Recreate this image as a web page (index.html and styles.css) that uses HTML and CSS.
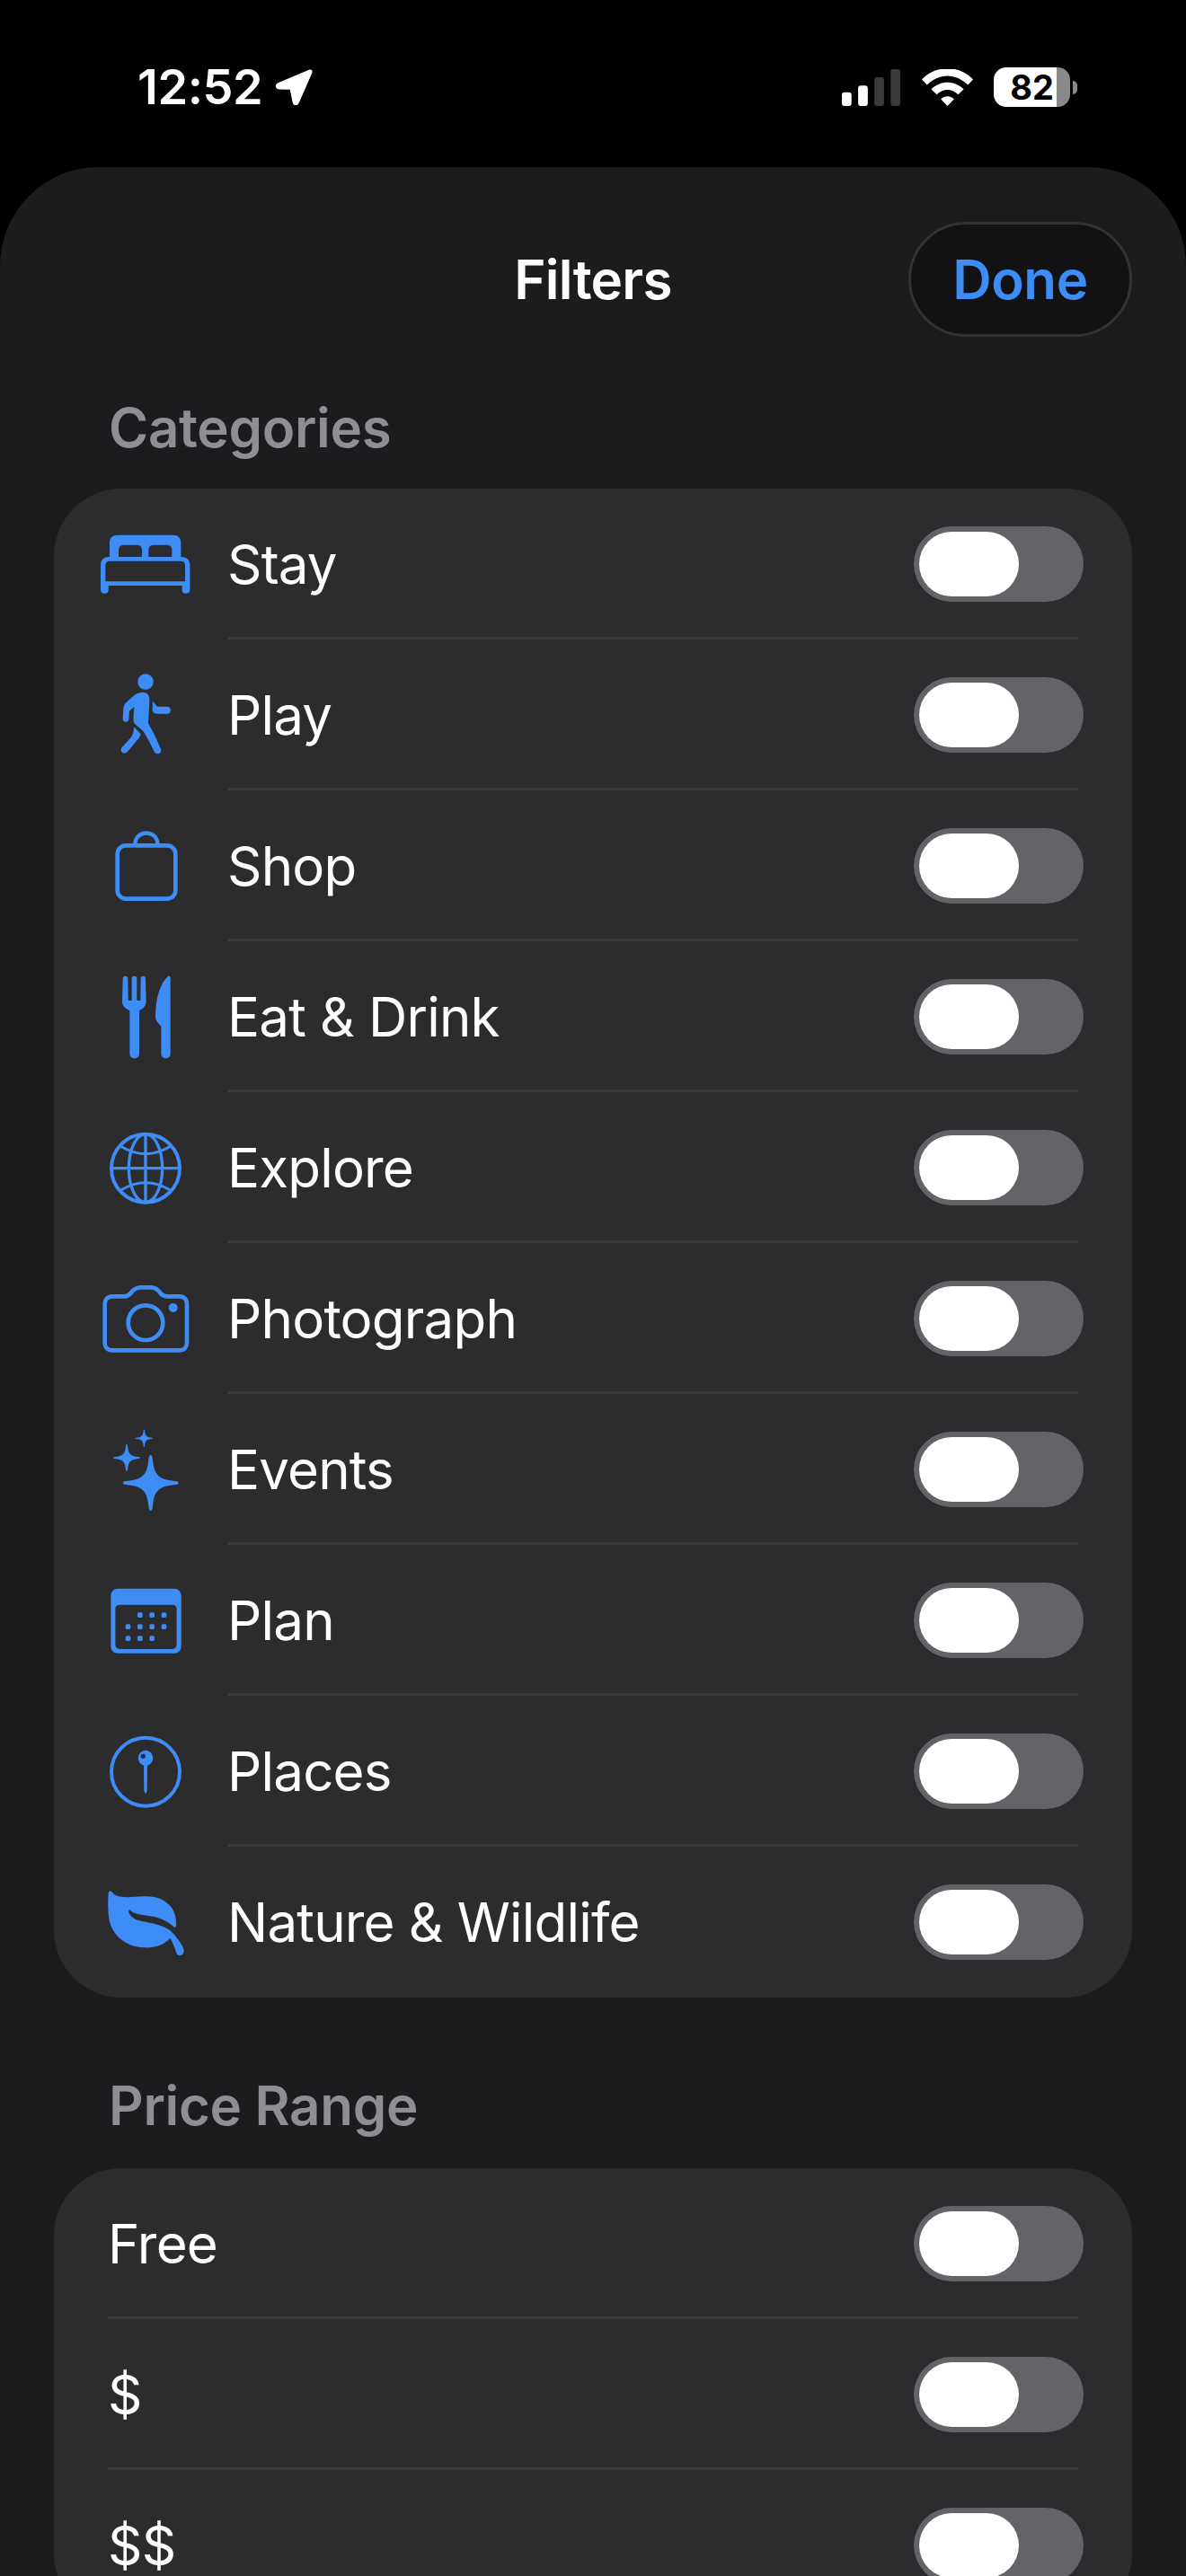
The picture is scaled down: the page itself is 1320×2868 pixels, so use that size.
FILE: index.html
```html
<!DOCTYPE html>
<html lang="en">
<head>
<meta charset="utf-8">
<title>Filters</title>
<link rel="stylesheet" href="styles.css">
</head>
<body>
<div class="status">
  <div class="status-left">
    <span class="time">12:52</span>
    <svg class="loc" viewBox="545 80 135 130"><path d="M662 85C671 82 676 88 672 97L628 197C623 208 609 207 607 195L598 152L562 151C548 150 546 134 558 129Z"/></svg>
  </div>
  <div class="status-right">
    <svg class="signal" viewBox="172 78 194 122"><rect x="172" y="155" width="32" height="45" rx="9" class="on"/><rect x="226" y="132" width="32" height="68" rx="9" class="on"/><rect x="280" y="105" width="32" height="95" rx="9" class="off"/><rect x="334" y="78" width="32" height="122" rx="9" class="off"/></svg>
    <svg class="wifi" viewBox="435 78 170 122"><path d="M435 112C482 63 558 63 605 112L588 130C548 90 492 90 452 130Z"/><path d="M466 144C497 114 543 114 574 144L556 162C533 141 507 141 484 162Z"/><path d="M498 177C511 165 529 165 542 177L520 200Z"/></svg>
    <div class="battery"><span>82</span></div>
  </div>
</div>
<main class="sheet">
  <header class="nav">
    <h1 class="title">Filters</h1>
    <button class="done">Done</button>
  </header>

  <h2 class="section first">Categories</h2>
  <section class="card icons">
    <div class="row">
      <svg class="icon" viewBox="126 24 360 360"><path fill-rule="evenodd" d="M156 206C156 190 168 180 184 180H426C442 180 454 190 454 206V292C454 298 449 302 444 302H438C432 302 428 298 428 292V276H182V292C182 298 178 302 172 302H166C161 302 156 298 156 292ZM172 208V262H438V208C438 199 433 194 424 194H186C177 194 172 199 172 208Z"/><path d="M186 180V132C186 116 196 107 212 107H398C414 107 424 116 424 132V180H394V158C394 146 388 140 376 140H334C322 140 316 146 316 158V180H294V158C294 146 288 140 276 140H234C222 140 216 146 216 158V180Z"/></svg>
      <div class="main"><span class="label">Stay</span><span class="toggle"></span></div>
    </div>
    <div class="row">
      <svg class="icon" viewBox="126 528 360 360"><circle cx="306" cy="597" r="26"/><path d="M290 633C310 630 320 640 319 660L316 720C315 730 313 735 318 742C330 760 345 795 357 822C362 835 345 845 335 830C325 810 310 780 300 765C290 752 275 745 268 735C263 720 268 700 268 680L252 695L250 722C249 735 230 735 230 720L232 685C233 675 238 668 245 663C262 648 272 636 290 633Z"/><path d="M330 662L345 680H378C394 680 394 704 378 704H345C335 704 329 698 329 690Z"/><path d="M268 748L290 772C288 780 284 785 280 790L246 830C234 844 215 828 228 815L258 782C265 772 266 760 268 748Z"/></svg>
      <div class="main"><span class="label">Play</span><span class="toggle"></span></div>
    </div>
    <div class="row">
      <svg class="icon" viewBox="126 1032 360 360"><rect class="line" x="212" y="1144" width="194" height="178" rx="28" stroke-width="14"/><path class="line" d="M271 1140C271 1090 346 1090 346 1140" stroke-width="13"/></svg>
      <div class="main"><span class="label">Shop</span><span class="toggle"></span></div>
    </div>
    <div class="row">
      <svg class="icon" viewBox="126 336 360 360"><path d="M230 388C230 378 247 378 247 388L248 462H260L260 388C260 378 277 378 277 388L277 462H289L290 388C290 378 306 378 306 388L308 465C308 480 298 488 285 496L285 640C285 660 253 660 253 640L253 496C238 488 228 480 228 465Z"/><path d="M381 380C386 378 389 382 389 388V640C389 660 358 660 358 640V548L346 534C340 528 339 522 339 514C340 450 355 405 381 380Z"/></svg>
      <div class="main"><span class="label">Eat &amp; Drink</span><span class="toggle"></span></div>
    </div>
    <div class="row">
      <svg class="icon" viewBox="126 840 360 360"><g class="line"><circle cx="306" cy="1022" r="114" stroke-width="12"/><ellipse cx="306" cy="1022" rx="56" ry="114" stroke-width="10"/><path d="M306 908V1136M192 1022H420" stroke-width="10"/><path d="M222 948Q306 1000 390 948M222 1096Q306 1044 390 1096" stroke-width="9"/></g></svg>
      <div class="main"><span class="label">Explore</span><span class="toggle"></span></div>
    </div>
    <div class="row">
      <svg class="icon" viewBox="126 144 360 360"><path class="line" stroke-width="14" d="M170 275C170 260 180 250 195 250H235C245 250 250 246 256 240C264 228 272 221 288 220H326C340 221 348 228 356 240C362 246 368 250 378 250H420C434 250 444 260 444 275V405C444 420 434 430 420 430H194C180 430 170 420 170 405Z"/><circle class="line" cx="306" cy="338" r="58" stroke-width="14"/><circle cx="398" cy="288" r="15"/></svg>
      <div class="main"><span class="label">Photograph</span><span class="toggle"></span></div>
    </div>
    <div class="row">
      <svg class="icon" viewBox="126 648 360 360"><path d="M323 780C327 780 329 785 330 795C334 840 345 862 405 867C420 869 420 877 405 879C345 884 334 906 330 951C329 961 327 966 323 966C319 966 317 961 316 951C312 906 301 884 241 879C226 877 226 869 241 867C301 862 312 840 316 795C317 785 319 780 323 780Z"/><path transform="translate(243 789) scale(.485) translate(-323 -873)" d="M323 780C327 780 329 785 330 795C334 840 345 862 405 867C420 869 420 877 405 879C345 884 334 906 330 951C329 961 327 966 323 966C319 966 317 961 316 951C312 906 301 884 241 879C226 877 226 869 241 867C301 862 312 840 316 795C317 785 319 780 323 780Z"/><path transform="translate(301 724) scale(.31) translate(-323 -873)" d="M323 780C327 780 329 785 330 795C334 840 345 862 405 867C420 869 420 877 405 879C345 884 334 906 330 951C329 961 327 966 323 966C319 966 317 961 316 951C312 906 301 884 241 879C226 877 226 869 241 867C301 862 312 840 316 795C317 785 319 780 323 780Z"/></svg>
      <div class="main"><span class="label">Events</span><span class="toggle"></span></div>
    </div>
    <div class="row">
      <svg class="icon" viewBox="126 -48 360 360"><path fill-rule="evenodd" d="M214 26H401C415 26 425 36 425 50V218C425 232 415 242 401 242H214C200 242 190 232 190 218V50C190 36 200 26 214 26ZM219 80C211 80 205 86 205 94V214C205 222 211 228 219 228H396C404 228 410 222 410 214V94C410 86 404 80 396 80Z"/><rect x="279" y="106" width="17" height="17" rx="5"/><rect x="319" y="106" width="17" height="17" rx="5"/><rect x="359" y="106" width="17" height="17" rx="5"/><rect x="239" y="145" width="17" height="17" rx="5"/><rect x="279" y="145" width="17" height="17" rx="5"/><rect x="319" y="145" width="17" height="17" rx="5"/><rect x="359" y="145" width="17" height="17" rx="5"/><rect x="239" y="184" width="17" height="17" rx="5"/><rect x="279" y="184" width="17" height="17" rx="5"/><rect x="319" y="184" width="17" height="17" rx="5"/></svg>
      <div class="main"><span class="label">Plan</span><span class="toggle"></span></div>
    </div>
    <div class="row">
      <svg class="icon" viewBox="126 456 360 360"><circle class="line" cx="306" cy="638" r="114" stroke-width="12"/><path fill-rule="evenodd" d="M306 566A26 26 0 0 1 312 617L311 700Q306 722 301 700L300 617A26 26 0 0 1 306 566ZM298 578A8 8 0 1 0 298 594A8 8 0 1 0 298 578Z"/></svg>
      <div class="main"><span class="label">Places</span><span class="toggle"></span></div>
    </div>
    <div class="row">
      <svg class="icon" viewBox="126 960 360 360"><path d="M182 1045C182 1035 190 1033 196 1042C205 1055 225 1058 260 1056C300 1053 340 1050 370 1070C398 1088 410 1115 408 1155L402 1158C385 1140 360 1128 335 1122L290 1115C270 1112 258 1105 252 1098C245 1105 255 1122 275 1132C290 1138 320 1141 345 1148C370 1155 390 1165 405 1185C420 1205 432 1220 434 1235C434 1252 416 1256 410 1245C405 1230 398 1210 388 1193C370 1215 335 1227 300 1225C240 1222 195 1185 184 1130C180 1100 180 1070 182 1045Z"/></svg>
      <div class="main"><span class="label">Nature &amp; Wildlife</span><span class="toggle"></span></div>
    </div>
  </section>

  <h2 class="section">Price Range</h2>
  <section class="card">
    <div class="row"><div class="main"><span class="label">Free</span><span class="toggle"></span></div></div>
    <div class="row"><div class="main"><span class="label">$</span><span class="toggle"></span></div></div>
    <div class="row"><div class="main"><span class="label">$$</span><span class="toggle"></span></div></div>
  </section>
</main>
</body>
</html>
```
FILE: styles.css
```css
* { box-sizing: border-box; margin: 0; padding: 0; }
html, body { height: 2868px; overflow: hidden; }
body { background: #000; color: #fff; font-family: Inter, "Liberation Sans", sans-serif; }

.status { height: 186px; padding: 8px 121px 0 153px; display: flex; align-items: center; justify-content: space-between; }
.status-left { display: flex; align-items: center; gap: 13px; }
.time { font-size: 54px; font-weight: 600; line-height: 60px; letter-spacing: -0.4px; }
.loc { width: 45px; height: 43px; fill: #fff; }
.status-right { display: flex; align-items: center; }
.signal { width: 65px; height: 41px; margin-right: 24px; }
.signal .on { fill: #fff; }
.signal .off { fill: #3a3a3c; }
.wifi { width: 57px; height: 41px; margin-right: 23px; fill: #fff; }
.battery { position: relative; width: 85px; height: 44px; border-radius: 14px; background: linear-gradient(to right, #fff 0 82%, #8a8a8a 82% 100%); color: #000; font-size: 38px; font-weight: 700; line-height: 44px; text-align: center; margin-right: 8px; }
.battery::after { content: ""; position: absolute; right: -8px; top: 15px; width: 5px; height: 15px; border-radius: 0 6px 6px 0; background: #8a8a8a; }

.sheet { background: #1c1c1e; border-radius: 110px 110px 0 0; padding: 61px 60px 0; height: 2682px; }
.nav { height: 128px; display: grid; grid-template-columns: 1fr auto 1fr; align-items: center; }
.title { grid-column: 2; font-size: 60px; font-weight: 600; line-height: 70px; letter-spacing: -0.7px; }
.done { grid-column: 3; justify-self: end; width: 249px; height: 128px; border-radius: 64px; border: 3px solid #333335; background: #121214; color: #3e8cf5; font: 600 60px/70px Inter, "Liberation Sans", sans-serif; letter-spacing: -0.4px; }

.section { margin: 88px 0 38px; padding-left: 61px; color: #8e8e93; font-size: 60px; font-weight: 600; line-height: 64px; letter-spacing: -0.3px; }
.section.first { margin: 69px 0 36px; }

.card { background: #2c2c2e; border-radius: 75px; }
.row { display: flex; align-items: center; padding-left: 60px; }
.icons .row { padding-left: 42px; }
.icon { width: 120px; height: 120px; flex: none; fill: #3e8cf5; margin-right: 31px; }
.line { fill: none; stroke: #3e8cf5; }
.main { flex: 1; height: 168px; padding-right: 54px; display: flex; align-items: center; justify-content: space-between; position: relative; }
.main::after { content: ""; position: absolute; left: 0; right: 60px; bottom: 0; height: 3px; background: #3a3a3c; }
.row:last-child .main::after { display: none; }
.label { font-size: 60px; line-height: 72px; letter-spacing: -0.8px; }
.toggle { position: relative; flex: none; width: 189px; height: 84px; border-radius: 42px; background: #636368; }
.toggle::before { content: ""; position: absolute; left: 6px; top: 6px; width: 111px; height: 72px; border-radius: 36px; background: #fff; }
```
